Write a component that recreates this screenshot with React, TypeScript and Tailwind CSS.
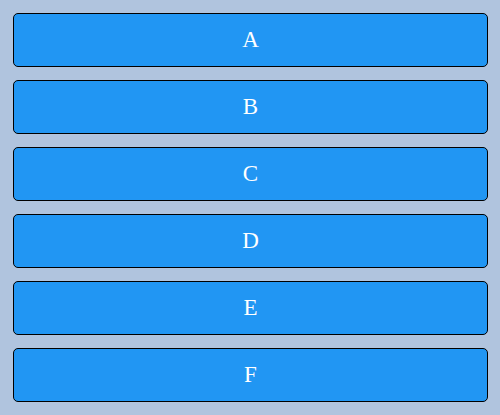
const labels = ["A", "B", "C", "D", "E", "F"];

export default function App() {
  return (
    <div className="flex h-[415px] w-[500px] flex-col gap-[13px] bg-[#b0c4de] px-[13px] py-[13px]">
      {labels.map((label) => (
        <button
          key={label}
          className="flex h-[54px] w-[475px] items-center justify-center rounded-[5px] border border-black bg-[#2196f3] pb-[2px] font-['Liberation_Serif',serif] text-[23px] leading-none text-white"
        >
          {label}
        </button>
      ))}
    </div>
  );
}
